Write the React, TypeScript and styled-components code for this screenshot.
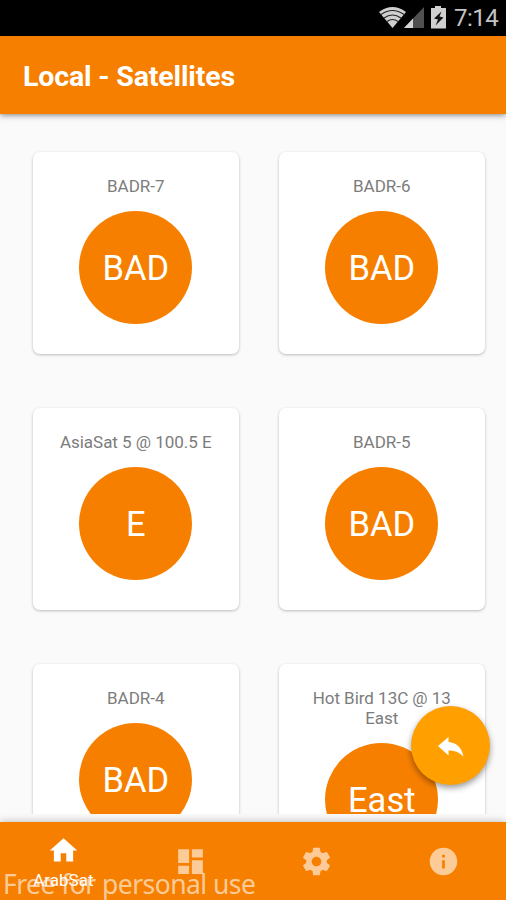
import React from 'react';
import styled, { createGlobalStyle } from 'styled-components';

const GlobalStyle = createGlobalStyle`
  * { box-sizing: border-box; }
  body { margin: 0; background: #fafafa; font-family: Roboto, "Liberation Sans", sans-serif; }
`;

const Screen = styled.div`
  position: relative;
  width: 506px;
  height: 900px;
  overflow: hidden;
  display: flex;
  flex-direction: column;
  background: #fafafa;
`;

const StatusBar = styled.div`
  flex: none;
  height: 36px;
  background: #000;
  display: flex;
  align-items: center;
  justify-content: flex-end;
  padding-right: 7px;
`;

const StatusIcons = styled.svg`
  display: block;
  width: 76px;
  height: 36px;
`;

const Clock = styled.span`
  width: 45px;
  color: #c4c4c4;
  font-size: 24px;
  line-height: 36px;
  letter-spacing: -0.5px;
  white-space: nowrap;
`;

const AppBar = styled.header`
  flex: none;
  position: relative;
  z-index: 1;
  height: 78px;
  padding: 3px 0 0 23px;
  display: flex;
  align-items: center;
  background: #f77f00;
  box-shadow: 0 1px 6px rgba(0, 0, 0, 0.5);
`;

const Title = styled.h1`
  margin: 0;
  color: #fff;
  font-size: 28.5px;
  font-weight: 700;
  letter-spacing: -0.15px;
`;

const Grid = styled.main`
  flex: none;
  height: 700px;
  overflow: hidden;
  padding: 37.5px 21px 0 33px;
  display: grid;
  grid-template-columns: 205.5px 205.5px;
  grid-auto-rows: 202px;
  column-gap: 40.5px;
  row-gap: 54px;
`;

const Card = styled.article`
  display: flex;
  flex-direction: column;
  align-items: center;
  padding-top: 24.5px;
  border-radius: 7px;
  background: #fff;
  box-shadow: 0 1px 3px rgba(0, 0, 0, 0.26);
`;

const CardLabel = styled.div`
  width: 160px;
  color: #7c7c7c;
  font-size: 17px;
  line-height: 20px;
  letter-spacing: -0.03px;
  text-align: center;
`;

const Badge = styled.div`
  flex: none;
  width: 113px;
  height: 113px;
  margin-top: 15px;
  padding-top: 1px;
  border-radius: 50%;
  display: flex;
  align-items: center;
  justify-content: center;
  background: #f77f00;
  color: #fff;
  font-size: 34.5px;
  line-height: 40px;
`;

const BottomNav = styled.nav`
  flex: none;
  position: relative;
  height: 78px;
  margin-top: 8px;
  display: grid;
  grid-template-columns: repeat(4, 126.7px);
  background: #f77f00;
  box-shadow: 0 0 8px rgba(0, 0, 0, 0.28);
`;

const NavItem = styled.div<{ $active?: boolean }>`
  display: flex;
  flex-direction: column;
  align-items: center;
  padding-top: ${(p) => (p.$active ? '11.5px' : '22.5px')};
  color: ${(p) => (p.$active ? '#fff' : '#fdcb98')};
`;

const NavIcon = styled.svg`
  display: block;
  flex: none;
  width: 33px;
  height: 33px;
  fill: currentColor;
`;

const NavLabel = styled.span`
  margin-top: 4.5px;
  font-size: 17px;
  line-height: 19px;
`;

const Watermark = styled.div`
  position: absolute;
  left: 3px;
  bottom: -1px;
  color: rgba(255, 255, 255, 0.6);
  font-family: "Noto Sans", sans-serif;
  font-size: 26.5px;
  line-height: 34px;
  letter-spacing: -0.55px;
  white-space: nowrap;
`;

const Fab = styled.button`
  position: absolute;
  left: 411px;
  top: 706px;
  width: 79px;
  height: 79px;
  padding: 3px 0 0;
  border: 0;
  border-radius: 50%;
  display: flex;
  align-items: center;
  justify-content: center;
  background: #ffa000;
  box-shadow: 0 3px 6px rgba(0, 0, 0, 0.4);
`;

const FabIcon = styled.svg`
  width: 26px;
  height: 22px;
  fill: #fff;
`;

const satellites = [
  { name: 'BADR-7', code: 'BAD' },
  { name: 'BADR-6', code: 'BAD' },
  { name: 'AsiaSat 5 @ 100.5 E', code: 'E' },
  { name: 'BADR-5', code: 'BAD' },
  { name: 'BADR-4', code: 'BAD' },
  { name: 'Hot Bird 13C @ 13 East', code: 'East' },
];

const tabs = [
  { path: 'M10 20v-6h4v6h5v-8h3L12 3 2 12h3v8z', label: 'ArabSat' },
  { path: 'M3 13h8V3H3v10zm0 8h8v-6H3v6zm10 0h8V11h-8v10zm0-18v6h8V3h-8z' },
  {
    path: 'M19.43 12.98c.04-.32.07-.64.07-.98s-.03-.66-.07-.98l2.11-1.65c.19-.15.24-.42.12-.64l-2-3.46c-.12-.22-.39-.3-.61-.22l-2.49 1c-.52-.4-1.08-.73-1.69-.98l-.38-2.65C14.46 2.18 14.25 2 14 2h-4c-.25 0-.46.18-.49.42l-.38 2.65c-.61.25-1.17.59-1.69.98l-2.49-1c-.23-.09-.49 0-.61.22l-2 3.46c-.13.22-.07.49.12.64l2.11 1.65c-.04.32-.07.65-.07.98s.03.66.07.98l-2.11 1.65c-.19.15-.24.42-.12.64l2 3.46c.12.22.39.3.61.22l2.49-1c.52.4 1.08.73 1.69.98l.38 2.65c.03.24.24.42.49.42h4c.25 0 .46-.18.49-.42l.38-2.65c.61-.25 1.17-.59 1.69-.98l2.49 1c.23.09.49 0 .61-.22l2-3.46c.12-.22.07-.49-.12-.64l-2.11-1.65zM12 15.5c-1.93 0-3.5-1.57-3.5-3.5s1.57-3.5 3.5-3.5 3.5 1.57 3.5 3.5-1.57 3.5-3.5 3.5z',
  },
  { path: 'M12 2C6.48 2 2 6.48 2 12s4.48 10 10 10 10-4.48 10-10S17.52 2 12 2zm1 15h-2v-6h2v6zm0-8h-2V7h2v2z' },
];

export default function App() {
  return (
    <>
      <GlobalStyle />
      <Screen>
        <StatusBar>
          <StatusIcons viewBox="0 0 76 36">
            <path d="M1 12Q14.500 2 28 12L14.500 28Z" fill="#d0d0d0" />
            <g fill="none" stroke="#242424" strokeWidth="1.200">
              <path d="M3 14.500Q14.500 6.500 26 14.500" />
              <path d="M6 18Q14.500 12 23 18" />
              <path d="M9 21.500Q14.500 17.500 20 21.500" />
            </g>
            <path d="M46 7V28H26Z" fill="#505050" />
            <path d="M35 18.500V28H26Z" fill="#d6d6d6" />
            <path d="M57 6h6v2h5v20.500H53V8h4z" fill="#d0d0d0" />
            <path d="M63.500 11.500 56 18.500l4 1-2.500 6 8-8-4-1z" fill="#111" />
          </StatusIcons>
          <Clock>7:14</Clock>
        </StatusBar>
        <AppBar>
          <Title>Local - Satellites</Title>
        </AppBar>
        <Grid>
          {satellites.map((s) => (
            <Card key={s.name}>
              <CardLabel>{s.name}</CardLabel>
              <Badge>{s.code}</Badge>
            </Card>
          ))}
        </Grid>
        <BottomNav>
          {tabs.map((t) => (
            <NavItem key={t.path} $active={!!t.label}>
              <NavIcon viewBox="0 0 24 24">
                <path d={t.path} />
              </NavIcon>
              {t.label && <NavLabel>{t.label}</NavLabel>}
            </NavItem>
          ))}
          <Watermark>Free for personal use</Watermark>
        </BottomNav>
        <Fab aria-label="Back">
          <FabIcon viewBox="0 0 26 22">
            <path d="M0 10 10.500 1v5C18.500 6.500 23.500 11.500 25.500 20.500 21 16 16 14.500 10.500 14.500V19.500Z" />
          </FabIcon>
        </Fab>
      </Screen>
    </>
  );
}
